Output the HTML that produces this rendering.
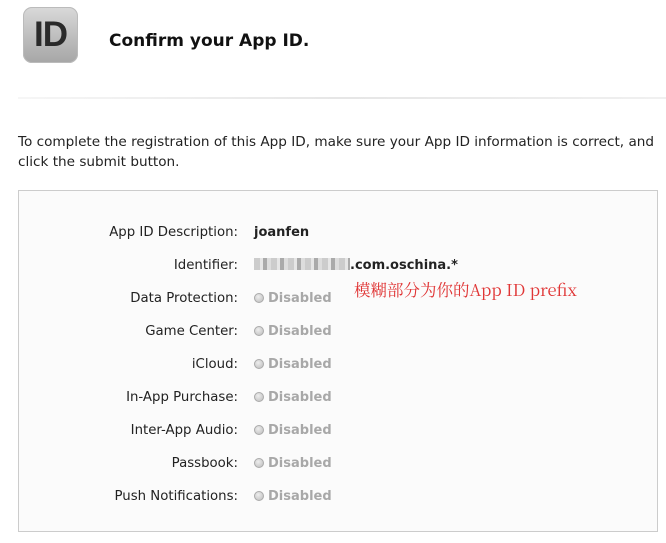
<!DOCTYPE html>
<html><head><style>
body{margin:0;width:666px;height:543px;background:#fff;font-family:"DejaVu Sans","Noto Sans CJK SC",sans-serif;position:relative;overflow:hidden;color:#222}
.icon{position:absolute;left:23px;top:7px;width:55px;height:56px;border-radius:9px;background:linear-gradient(#d9d9d9,#a6a6a6);box-shadow:inset 0 0 0 1px #bbb}
.icon span{position:absolute;left:0;right:0;top:8px;text-align:center;font-size:35px;font-weight:bold;color:#2a2a2a;letter-spacing:-1px;font-family:"Liberation Sans",sans-serif}
h1{position:absolute;left:109px;top:31px;margin:0;font-size:17px;font-weight:bold;color:#111}
.line{position:absolute;left:18px;right:0;top:97px;height:2px;background:linear-gradient(90deg,#f6f6f6,#e6e6e6 50%,#f0f0f0)}
p{position:absolute;left:18px;top:132px;margin:0;width:640px;font-size:13.6px;line-height:20px;color:#222}
.box{position:absolute;left:18px;top:190px;width:640px;height:342px;background:#fbfbfb;border:1px solid #ccc;box-sizing:border-box}
.row{position:absolute;left:0;width:666px;font-size:13.3px;height:20px;line-height:20px}
.l{position:absolute;right:428px;text-align:right;white-space:nowrap;color:#222}
.v{position:absolute;left:254px;white-space:nowrap}
.b{font-weight:bold;font-size:13px}
.dis{color:#a8a8a8;font-weight:bold;font-size:13px}
.dot{display:inline-block;width:10px;height:10px;border-radius:50%;background:radial-gradient(circle at 40% 35%,#eee,#bbb);border:1px solid #aaa;box-sizing:border-box;margin-right:4px;vertical-align:-1px}
.blur{display:inline-block;width:96px;height:12px;vertical-align:-1px;background:repeating-linear-gradient(90deg,#ccc 0 6px,#e6e6e6 6px 9px,#aaa 9px 13px,#ddd 13px 17px)}
.note{position:absolute;left:354px;top:277px;color:#e03535;font-family:"Noto Serif CJK SC","Liberation Serif",serif;font-size:16.5px}
</style></head><body>
<div class="icon"><span>ID</span></div>
<h1>Confirm your App ID.</h1>
<div class="line"></div>
<p>To complete the registration of this App ID, make sure your App ID information is correct, and click the submit button.</p>
<div class="box"></div>
<div class="row" style="top:223px"><span class="l">App ID Description:</span><span class="v b">joanfen</span></div>
<div class="row" style="top:256px"><span class="l">Identifier:</span><span class="v b"><span class="blur"></span>.com.oschina.*</span></div>
<div class="row" style="top:289px"><span class="l">Data Protection:</span><span class="v dis"><span class="dot"></span>Disabled</span></div>
<div class="row" style="top:322px"><span class="l">Game Center:</span><span class="v dis"><span class="dot"></span>Disabled</span></div>
<div class="row" style="top:355px"><span class="l">iCloud:</span><span class="v dis"><span class="dot"></span>Disabled</span></div>
<div class="row" style="top:388px"><span class="l">In-App Purchase:</span><span class="v dis"><span class="dot"></span>Disabled</span></div>
<div class="row" style="top:421px"><span class="l">Inter-App Audio:</span><span class="v dis"><span class="dot"></span>Disabled</span></div>
<div class="row" style="top:454px"><span class="l">Passbook:</span><span class="v dis"><span class="dot"></span>Disabled</span></div>
<div class="row" style="top:487px"><span class="l">Push Notifications:</span><span class="v dis"><span class="dot"></span>Disabled</span></div>
<div class="note">模糊部分为你的App ID prefix</div>
</body></html>
